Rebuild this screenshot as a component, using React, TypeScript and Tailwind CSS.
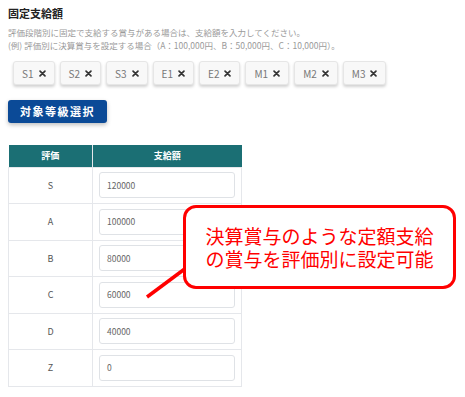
import React from "react";

const grades = ["S1", "S2", "S3", "E1", "E2", "M1", "M2", "M3"];
const rows = [
  { rank: "S", amount: "120000" },
  { rank: "A", amount: "100000" },
  { rank: "B", amount: "80000" },
  { rank: "C", amount: "60000" },
  { rank: "D", amount: "40000" },
  { rank: "Z", amount: "0" },
];

const font = { fontFamily: '"Noto Sans CJK JP", "Noto Sans", sans-serif' };

const CloseIcon = () => (
  <svg width="7" height="7" viewBox="0 0 10 10">
    <path d="M1.5 1.5 L8.5 8.5 M8.5 1.5 L1.5 8.5" stroke="#333" strokeWidth="2.4" strokeLinecap="round" />
  </svg>
);

const App = () => {
  return (
    <div className="relative w-[465px] h-[397px] bg-white overflow-hidden text-[#333]" style={font}>
      <div className="pl-2 pt-[6px]">
        <h1 className="text-[11px] font-bold leading-[14px] text-[#222]">固定支給額</h1>
        <div className="mt-[6px] text-[8.5px] leading-[13px] text-[#9a9a9a]">
          <p>評価段階別に固定で支給する賞与がある場合は、支給額を入力してください。</p>
          <p>(例) 評価別に決算賞与を設定する場合（A：100,000円、B：50,000円、C：10,000円）。</p>
        </div>
        <div className="mt-[9px] ml-[5px] flex gap-[5px]">
          {grades.map((g) => (
            <div
              key={g}
              className="h-6 px-[8px] flex items-center justify-center gap-[5px] bg-[#f8f8f8] border border-[#e6e6e6] rounded-[3px] shadow-[0_2px_3px_rgba(0,0,0,0.18)] text-[10px] text-[#777]"
            >
              <span>{g}</span>
              <CloseIcon />
            </div>
          ))}
        </div>
        <button className="mt-[15px] w-[99px] h-[23px] bg-[#0b4a97] rounded-[3px] text-white text-[11px] font-bold tracking-[1.5px] shadow-[0_2px_4px_rgba(0,0,0,0.25)]">
          対象等級選択
        </button>
        <table className="mt-[22px] w-[234px] border-collapse text-[9px]">
          <thead>
            <tr className="bg-[#1b6f74] text-white h-[22px]">
              <th className="w-[84px] font-bold border-r border-[#e5e7eb]">評価</th>
              <th className="font-bold">支給額</th>
            </tr>
          </thead>
          <tbody>
            {rows.map((r) => (
              <tr key={r.rank} className="h-[36.5px] border border-[#e5e7eb]">
                <td className="text-center text-[#555] border-r border-[#e5e7eb]">{r.rank}</td>
                <td className="px-[6px]">
                  <div className="h-[26px] border border-[#dfe2e6] rounded-[3px] flex items-center px-[7px] text-[8.5px] text-[#666]">
                    {r.amount}
                  </div>
                </td>
              </tr>
            ))}
          </tbody>
        </table>
      </div>

      <svg className="absolute left-0 top-0" width="465" height="397">
        <line x1="147" y1="297" x2="186" y2="268" stroke="#ff0000" strokeWidth="3.5" />
      </svg>
      <div className="absolute left-[183px] top-[205px] w-[273px] h-[84px] bg-white border-[3px] border-[#ff0000] rounded-[13px] flex items-center justify-center text-[#ff0000] text-[19px] leading-[23px]">
        <p className="text-center">
          決算賞与のような定額支給
          <br />
          の賞与を評価別に設定可能
        </p>
      </div>
    </div>
  );
};

export default App;
